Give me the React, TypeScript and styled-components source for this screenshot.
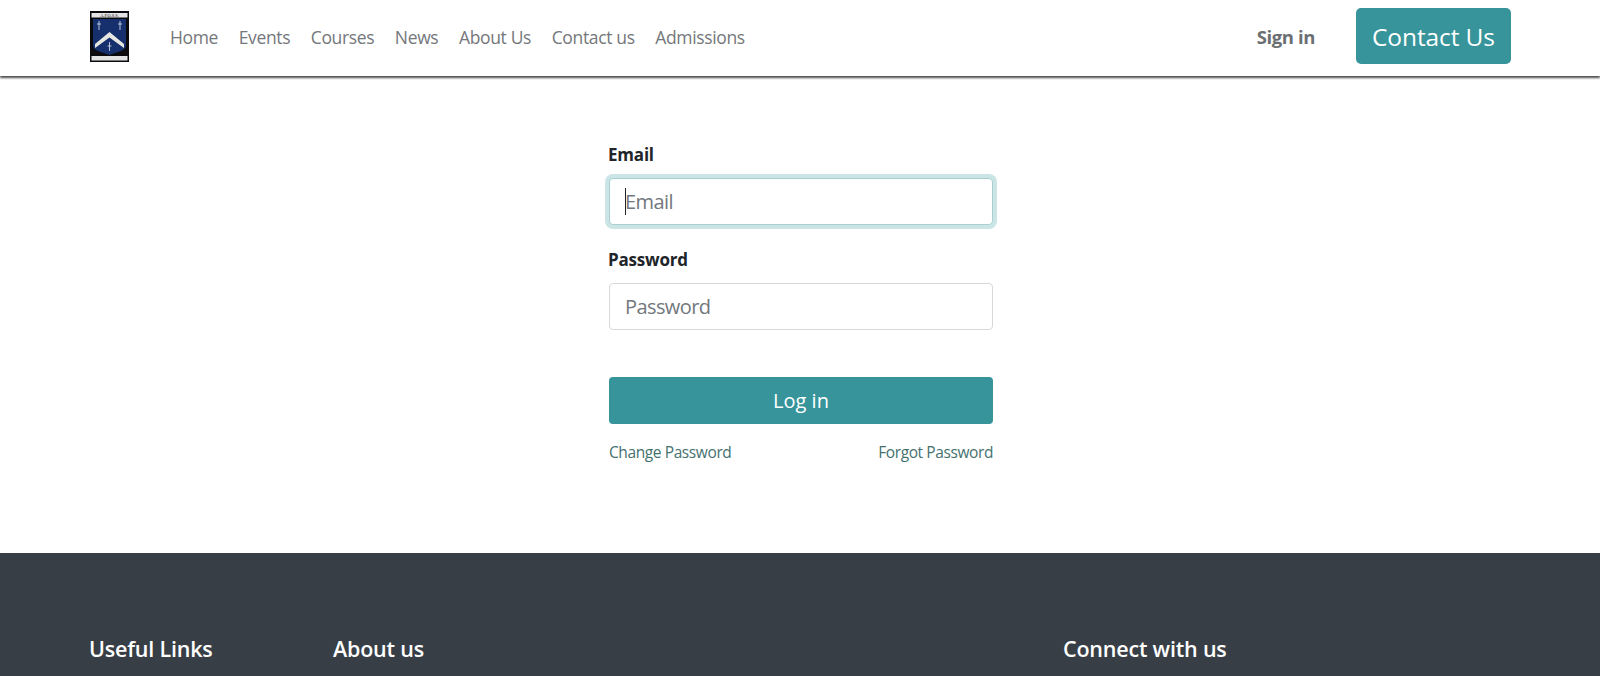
import React from 'react';
import styled, { createGlobalStyle } from 'styled-components';

const GlobalStyle = createGlobalStyle`
  html, body {
    margin: 0;
    padding: 0;
    background: #fff;
    font-family: 'Open Sans', 'Noto Sans', sans-serif;
  }
  * { box-sizing: border-box; }
`;

const Page = styled.div`
  height: 100vh;
  overflow: hidden;
  display: flex;
  flex-direction: column;
`;

const Navbar = styled.nav`
  height: 76px;
  flex: none;
  display: flex;
  align-items: center;
  padding: 0 89px;
  background: #fff;
  box-shadow: 0 2px 2px rgba(0, 0, 0, 0.7);
  position: relative;
`;

const Logo = styled.svg`
  width: 39px;
  height: 51px;
  flex: none;
  margin-left: 1px;
  margin-right: 41px;
  margin-top: -3px;
`;

const NavLinks = styled.div`
  display: flex;
  gap: 20.6px;
  flex: 1;
  padding-bottom: 2px;
`;

const NavLink = styled.a`
  font-size: 17.5px;
  color: #74777b;
  letter-spacing: -0.35px;
  text-decoration: none;
`;

const SignIn = styled.a`
  font-size: 18.5px;
  font-weight: 700;
  letter-spacing: -0.4px;
  color: #6c6f72;
  margin-right: 41px;
  padding-bottom: 4px;
`;

const ContactButton = styled.a`
  width: 155px;
  height: 56px;
  display: flex;
  align-items: center;
  justify-content: center;
  background: #36949a;
  color: #fff;
  border-radius: 5px;
  font-size: 24.5px;
  letter-spacing: -0.1px;
  margin-top: -4px;
`;

const Main = styled.main`
  height: 477px;
  flex: none;
  display: flex;
  justify-content: center;
  padding-top: 67px;
`;

const Form = styled.form`
  width: 384px;
  margin-left: 2px;
`;

const Field = styled.div`
  margin-bottom: 23px;
  position: relative;
`;

const Label = styled.label`
  display: block;
  font-size: 17px;
  line-height: 24px;
  font-weight: 700;
  letter-spacing: -0.2px;
  color: #212529;
  margin-bottom: 11px;
  margin-left: -1px;
`;

const Input = styled.input<{ $focused?: boolean }>`
  display: block;
  width: 100%;
  height: 47px;
  padding: 0 15px;
  background: #fff;
  border: 1px solid ${p => (p.$focused ? '#a9d0d1' : '#d6d9dc')};
  border-radius: 4px;
  font-family: inherit;
  font-size: 20px;
  letter-spacing: -0.6px;
  color: #212529;
  outline: none;
  box-shadow: ${p => (p.$focused ? '0 0 0 4px #cbe5e6' : 'none')};

  &::placeholder {
    color: #72777c;
    opacity: 1;
  }
`;

const Caret = styled.span`
  position: absolute;
  left: 16px;
  top: 45px;
  width: 1px;
  height: 27px;
  background: #212529;
`;

const SubmitButton = styled.button`
  display: block;
  width: 100%;
  height: 47px;
  margin-top: 47px;
  border: none;
  border-radius: 4px;
  background: #36949a;
  color: #fff;
  font-family: inherit;
  font-size: 20px;
`;

const HelpRow = styled.div`
  display: flex;
  justify-content: space-between;
  margin-top: 17px;
`;

const HelpLink = styled.a`
  font-size: 15.5px;
  letter-spacing: -0.4px;
  color: #45716f;
  text-decoration: none;
`;

const Footer = styled.footer`
  flex: 1;
  background: #383e45;
  display: grid;
  grid-template-columns: 244px 730px 1fr;
  padding: 82px 89px 0;
`;

const FooterHeading = styled.h5`
  margin: 0;
  font-size: 21.5px;
  line-height: 28px;
  font-weight: 600;
  letter-spacing: -0.2px;
  color: #fff;
`;

const navItems = ['Home', 'Events', 'Courses', 'News', 'About Us', 'Contact us', 'Admissions'];

export default function App() {
  return (
    <Page>
      <GlobalStyle />
      <Navbar>
        <Logo viewBox="0 0 39 51">
          <rect width="39" height="51" fill="#0b0b0f" />
          <rect x="1.5" y="2" width="36" height="4.5" fill="#e4e4e4" />
          <text x="19.5" y="5.8" fontSize="4.4" fontFamily="Liberation Serif, serif" textAnchor="middle" fill="#111">
            A.P.O.S.S.
          </text>
          <path d="M3 8 H36 V35 C36 40 26 41 19.5 44 C13 41 3 40 3 35 Z" fill="#16306e" />
          <path d="M5 33 L19.5 21 L34 33 L34 37 L19.5 26.5 L5 37 Z" fill="#e8e8e2" />
          <path d="M9 10 V19 M7 13 H11 M30 10 V19 M28 13 H32 M19.5 31 V40 M17.5 35 H21.5" stroke="#c9d2e4" strokeWidth="0.9" />
          <rect x="1.5" y="45" width="36" height="4.5" fill="#e2e2e2" />
        </Logo>
        <NavLinks>
          {navItems.map(item => (
            <NavLink key={item}>{item}</NavLink>
          ))}
        </NavLinks>
        <SignIn>Sign in</SignIn>
        <ContactButton>Contact Us</ContactButton>
      </Navbar>
      <Main>
        <Form>
          <Field>
            <Label>Email</Label>
            <Input $focused placeholder="Email" />
            <Caret />
          </Field>
          <Field>
            <Label>Password</Label>
            <Input type="password" placeholder="Password" />
          </Field>
          <SubmitButton type="button">Log in</SubmitButton>
          <HelpRow>
            <HelpLink>Change Password</HelpLink>
            <HelpLink>Forgot Password</HelpLink>
          </HelpRow>
        </Form>
      </Main>
      <Footer>
        <FooterHeading>Useful Links</FooterHeading>
        <FooterHeading>About us</FooterHeading>
        <FooterHeading>Connect with us</FooterHeading>
      </Footer>
    </Page>
  );
}
